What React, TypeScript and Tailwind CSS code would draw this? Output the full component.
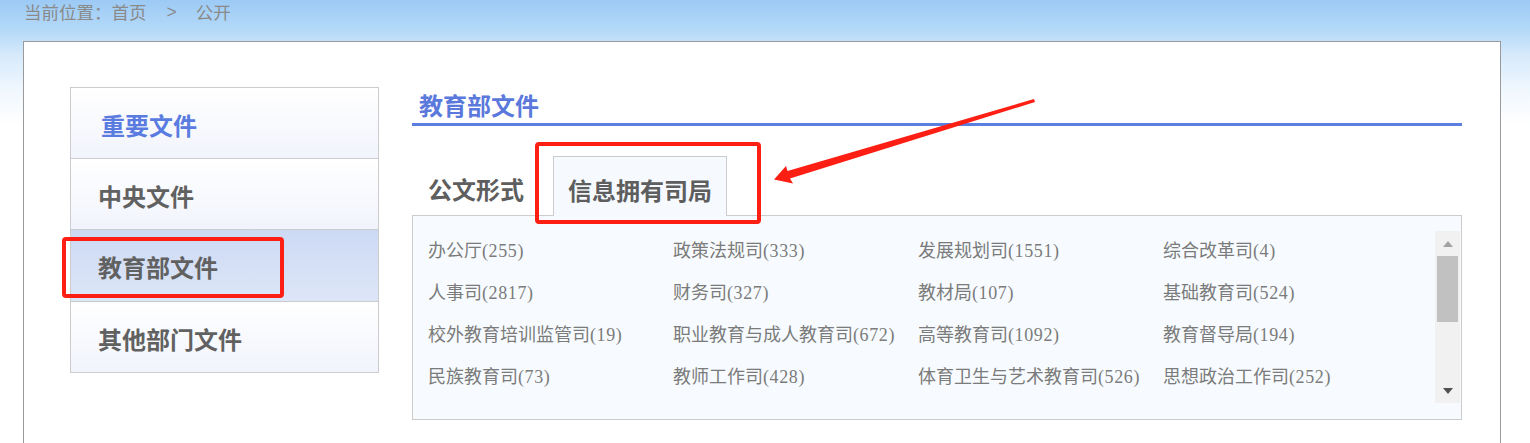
import React from "react";

const items: [string, string][] = [
  ["办公厅", "255"],
  ["政策法规司", "333"],
  ["发展规划司", "1551"],
  ["综合改革司", "4"],
  ["人事司", "2817"],
  ["财务司", "327"],
  ["教材局", "107"],
  ["基础教育司", "524"],
  ["校外教育培训监管司", "19"],
  ["职业教育与成人教育司", "672"],
  ["高等教育司", "1092"],
  ["教育督导局", "194"],
  ["民族教育司", "73"],
  ["教师工作司", "428"],
  ["体育卫生与艺术教育司", "526"],
  ["思想政治工作司", "252"],
];

export default function App() {
  return (
    <div className="relative h-[443px] w-[1530px] overflow-hidden bg-[linear-gradient(to_bottom,#9ccaf5_0px,#b4d9f8_30px,#d6eafb_55px,#f0f7fe_90px,#ffffff_125px)] font-['Noto_Sans_CJK_SC',sans-serif]">
      {/* breadcrumb */}
      <div className="flex h-[41px] items-start pl-[24px] pt-[2px] text-[17.5px] leading-[20px] text-[#8a8a8a]">
        <span>当前位置：首页</span>
        <span className="ml-[20px] font-['Liberation_Sans',sans-serif]">&gt;</span>
        <span className="ml-[19px]">公开</span>
      </div>

      {/* panel */}
      <div className="ml-[23px] flex h-[420px] w-[1478px] gap-[33px] border border-b-0 border-[#9a9a9a] bg-white pl-[46px] pt-[45px]">
        {/* sidebar */}
        <div className="w-[309px] self-start border border-b-0 border-[#cccccc]">
          <div className="flex h-[71px] items-center border-b border-[#cccccc] bg-[linear-gradient(to_bottom,#ffffff,#f1f4fc)] pl-[30px] pt-[3px] text-[24px] font-bold text-[#5a7be0]">
            重要文件
          </div>
          <div className="flex h-[71px] items-center border-b border-[#cccccc] bg-[linear-gradient(to_bottom,#ffffff,#f1f4fc)] pl-[27px] pt-[3px] text-[24px] font-bold text-[#616161]">
            中央文件
          </div>
          <div className="flex h-[72px] items-center border-b border-[#cccccc] bg-[linear-gradient(to_bottom,#cddaf4,#dde6f8)] pl-[27px] pt-[3px] text-[24px] font-bold text-[#616161]">
            教育部文件
          </div>
          <div className="flex h-[71px] items-center border-b border-[#cccccc] bg-[linear-gradient(to_bottom,#ffffff,#f1f4fc)] pl-[27px] pt-[3px] text-[24px] font-bold text-[#616161]">
            其他部门文件
          </div>
        </div>

        {/* main */}
        <div className="w-[1050px]">
          <div className="flex h-[39px] items-center border-b-[3px] border-[#5a7fe0] pl-[7px] text-[24px] font-bold text-[#5b78dc]">
            教育部文件
          </div>

          <div className="mt-[30px] flex h-[60px] items-stretch">
            <div className="flex w-[141px] items-center pl-[16px] pt-[6px] text-[24px] font-bold text-[#5e5e5e]">
              公文形式
            </div>
            <div className="relative z-10 flex items-center border border-b-0 border-[#cccccc] bg-[#f6fafe] px-[14px] pt-[6px] text-[24px] font-bold text-[#5e5e5e]">
              信息拥有司局
            </div>
          </div>

          <div className="-mt-px flex h-[205px] border border-[#cccccc] bg-[#f7fbff]">
            <div className="grid flex-1 auto-rows-[42px] grid-cols-[245px_245px_245px_245px] content-start pl-[15px] pt-[14px] font-['Liberation_Serif','Noto_Sans_CJK_SC',serif] text-[18px] text-[#7b7b7b]">
              {items.map(([n, c]) => (
                <div key={n} className="flex items-center whitespace-nowrap">
                  {n}
                  <span className="tracking-[0.6px]">({c})</span>
                </div>
              ))}
            </div>
            <div className="mr-px mt-[15px] flex h-[172px] w-[25px] flex-col items-center bg-[#f1f1f1]">
              <div className="flex h-[25px] items-center justify-center">
                <div className="h-0 w-0 border-x-[5px] border-b-[6px] border-x-transparent border-b-[#a3a3a3]" />
              </div>
              <div className="h-[66px] w-[21px] bg-[#c1c1c1]" />
              <div className="flex-1" />
              <div className="flex h-[25px] items-center justify-center">
                <div className="h-0 w-0 border-x-[5px] border-t-[6px] border-x-transparent border-t-[#505050]" />
              </div>
            </div>
          </div>
        </div>
      </div>

      {/* annotations */}
      <div className="absolute left-[62px] top-[237px] h-[61px] w-[222px] rounded-[4px] border-[4px] border-[#fe1f14]" />
      <div className="absolute left-[535px] top-[142px] h-[82px] w-[226px] rounded-[4px] border-[4px] border-[#fe1f14]" />
      <svg className="absolute left-0 top-0" width="1530" height="443" viewBox="0 0 1530 443">
        <polygon
          points="1034,99 1035,102 790,178.5 793,183.5 774,179.5 786,166 787.5,171"
          fill="#fe1f14"
        />
      </svg>
    </div>
  );
}
